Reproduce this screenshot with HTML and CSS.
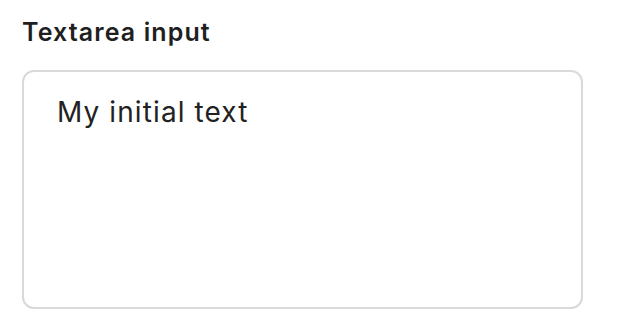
FILE: index.html
```html
<!DOCTYPE html>
<html>
<head>
<meta charset="utf-8">
<link rel="stylesheet" href="styles.css">
</head>
<body>
<div class="field">
  <label class="label" for="ta">Textarea input</label>
  <textarea id="ta" class="textarea">My initial text</textarea>
</div>
</body>
</html>
```
FILE: styles.css
```css
html, body {
  margin: 0;
  padding: 0;
  background: #ffffff;
}
.field {
  display: flex;
  flex-direction: column;
  padding: 16px 47px 0 22px;
  font-family: Inter, "Noto Sans", sans-serif;
}
.label {
  font-size: 25px;
  font-weight: 600;
  letter-spacing: 1.1px;
  color: #1f1f1f;
  line-height: 32px;
  margin-bottom: 22px;
}
.textarea {
  box-sizing: border-box;
  width: 561px;
  height: 239px;
  border: 2px solid #d9d9d9;
  border-radius: 12px;
  padding: 22px 33px;
  font-family: Inter, "Noto Sans", sans-serif;
  font-size: 28px;
  letter-spacing: 1.1px;
  line-height: 36px;
  color: #222222;
  resize: none;
  outline: none;
  margin: 0;
}
```
